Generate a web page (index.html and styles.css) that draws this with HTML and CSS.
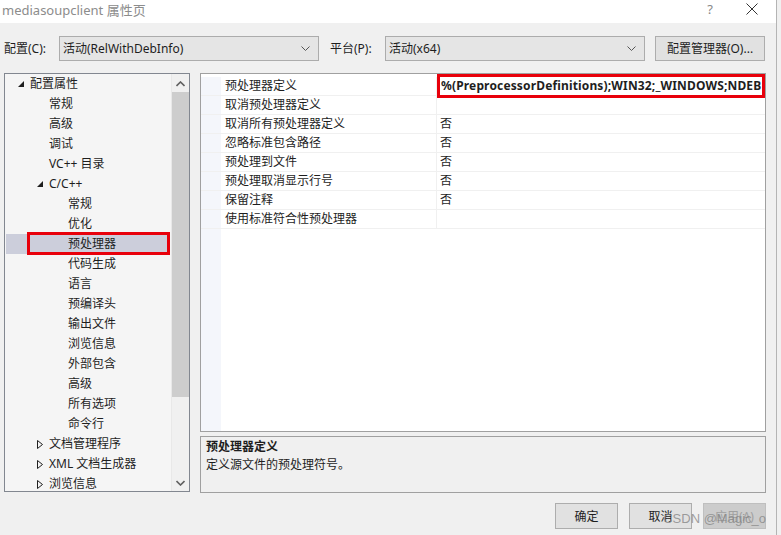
FILE: index.html
```html
<!DOCTYPE html>
<html lang="zh-CN">
<head>
  <meta charset="UTF-8">
  <title>mediasoupclient 属性页</title>
  <link rel="stylesheet" href="styles.css">
</head>
<body>

<div class="dialog">
  <div class="titlebar">
    <span class="title">mediasoupclient 属性页</span>
    <span class="title-help">?</span>
    <span class="title-close">
      <svg width="12" height="12" viewBox="0 0 12 12"><path d="M0.5 0.5 L11.5 11.5 M11.5 0.5 L0.5 11.5" stroke="#333" stroke-width="1" fill="none"/></svg>
    </span>
  </div>

  <div class="toolbar">
    <span class="tb-label">配置(C):</span>
    <div class="select select-config">
      <span>活动(RelWithDebInfo)</span>
      <svg class="chev" width="9" height="5" viewBox="0 0 9 5"><path d="M0.5 0.5 L4.5 4.5 L8.5 0.5" stroke="#555" fill="none"/></svg>
    </div>
    <span class="tb-label tb-label-platform">平台(P):</span>
    <div class="select select-platform">
      <span>活动(x64)</span>
      <svg class="chev" width="9" height="5" viewBox="0 0 9 5"><path d="M0.5 0.5 L4.5 4.5 L8.5 0.5" stroke="#555" fill="none"/></svg>
    </div>
    <button class="btn btn-manager">配置管理器(O)...</button>
  </div>

  <div class="main">
    <div class="tree">
      <ul class="tree-list">
        <li class="lvl0"><svg class="tri" width="6" height="6" viewBox="0 0 6 6"><path d="M6 0 L6 6 L0 6 Z" fill="#1e1e1e"/></svg>配置属性</li>
        <li class="lvl1">常规</li>
        <li class="lvl1">高级</li>
        <li class="lvl1">调试</li>
        <li class="lvl1">VC++ 目录</li>
        <li class="lvl1 has-tri"><svg class="tri" width="6" height="6" viewBox="0 0 6 6"><path d="M6 0 L6 6 L0 6 Z" fill="#1e1e1e"/></svg>C/C++</li>
        <li class="lvl2">常规</li>
        <li class="lvl2">优化</li>
        <li class="lvl2 selected">预处理器<span class="mark mark-tree"></span></li>
        <li class="lvl2">代码生成</li>
        <li class="lvl2">语言</li>
        <li class="lvl2">预编译头</li>
        <li class="lvl2">输出文件</li>
        <li class="lvl2">浏览信息</li>
        <li class="lvl2">外部包含</li>
        <li class="lvl2">高级</li>
        <li class="lvl2">所有选项</li>
        <li class="lvl2">命令行</li>
        <li class="lvl1 has-tri"><svg class="tri tri-open" width="6" height="9" viewBox="0 0 6 9"><path d="M0.5 0.5 L5.5 4.5 L0.5 8.5 Z" stroke="#1e1e1e" fill="none"/></svg>文档管理程序</li>
        <li class="lvl1 has-tri"><svg class="tri tri-open" width="6" height="9" viewBox="0 0 6 9"><path d="M0.5 0.5 L5.5 4.5 L0.5 8.5 Z" stroke="#1e1e1e" fill="none"/></svg>XML 文档生成器</li>
        <li class="lvl1 has-tri"><svg class="tri tri-open" width="6" height="9" viewBox="0 0 6 9"><path d="M0.5 0.5 L5.5 4.5 L0.5 8.5 Z" stroke="#1e1e1e" fill="none"/></svg>浏览信息</li>
      </ul>
      <div class="scrollbar">
        <svg class="sb-arrow" width="9" height="6" viewBox="0 0 9 6"><path d="M0.5 5 L4.5 1 L8.5 5" stroke="#606060" stroke-width="1.6" fill="none"/></svg>
        <div class="sb-track"><div class="sb-thumb"></div></div>
        <svg class="sb-arrow" width="9" height="6" viewBox="0 0 9 6"><path d="M0.5 1 L4.5 5 L8.5 1" stroke="#606060" stroke-width="1.6" fill="none"/></svg>
      </div>
    </div>

    <div class="right">
      <div class="grid">
        <div class="row">
          <div class="gutter"></div>
          <div class="name">预处理器定义</div>
          <div class="value value-bold"><span class="clip">%(PreprocessorDefinitions);WIN32;_WINDOWS;NDEB</span><span class="mark mark-value"></span></div>
        </div>
        <div class="row">
          <div class="gutter"></div>
          <div class="name">取消预处理器定义</div>
          <div class="value"></div>
        </div>
        <div class="row">
          <div class="gutter"></div>
          <div class="name">取消所有预处理器定义</div>
          <div class="value">否</div>
        </div>
        <div class="row">
          <div class="gutter"></div>
          <div class="name">忽略标准包含路径</div>
          <div class="value">否</div>
        </div>
        <div class="row">
          <div class="gutter"></div>
          <div class="name">预处理到文件</div>
          <div class="value">否</div>
        </div>
        <div class="row">
          <div class="gutter"></div>
          <div class="name">预处理取消显示行号</div>
          <div class="value">否</div>
        </div>
        <div class="row">
          <div class="gutter"></div>
          <div class="name">保留注释</div>
          <div class="value">否</div>
        </div>
        <div class="row">
          <div class="gutter"></div>
          <div class="name">使用标准符合性预处理器</div>
          <div class="value"></div>
        </div>
        <div class="grid-fill">
          <div class="gutter"></div>
        </div>
      </div>

      <div class="desc">
        <div class="desc-title">预处理器定义</div>
        <div class="desc-text">定义源文件的预处理符号。</div>
      </div>
    </div>
  </div>

  <div class="footer">
    <button class="btn">确定</button>
    <button class="btn">取消</button>
    <button class="btn" disabled>应用(A)</button>
    <span class="watermark">CSDN @Magic_o</span>
  </div>
</div>

</body>
</html>
```

FILE: styles.css
```css
body {
  margin: 0;
  background: #f0f0f0;
  font-family: "Noto Sans", "Noto Sans CJK SC", sans-serif;
  font-size: 12px;
  color: #1e1e1e;
}
.dialog {
  width: 776px;
  height: 535px;
  border-right: 1px solid #b4b4b4;
  position: relative;
  overflow: hidden;
}
.titlebar {
  height: 23px;
  background: #fff;
  display: flex;
  align-items: center;
  padding-left: 2px;
}
.title {
  font-size: 13px;
  color: #8c8c8c;
  flex: 1;
  margin-top: -5px;
}
.title-help {
  color: #888;
  font-size: 13px;
  margin-right: 33px;
  margin-top: -6px;
}
.title-close {
  margin-right: 18px;
  margin-top: -6px;
  display: flex;
}
.toolbar {
  height: 50px;
  display: flex;
  align-items: center;
  padding-left: 4px;
  box-sizing: border-box;
}
.tb-label {
  font-size: 12px;
  width: 55px;
}
.tb-label-platform {
  margin-left: 11px;
}
.select {
  height: 25px;
  box-sizing: border-box;
  border: 1px solid #acacac;
  background: #e5e5e5;
  display: flex;
  align-items: center;
  padding-left: 3px;
  padding-right: 8px;
  justify-content: space-between;
}
.select-config {
  width: 260px;
}
.select-platform {
  width: 260px;
}
.btn {
  font-family: "Noto Sans", "Noto Sans CJK SC", sans-serif;
  font-size: 12px;
  color: #1e1e1e;
  background: #e1e1e1;
  border: 1px solid #adadad;
  height: 26px;
  padding: 0;
}
.btn-manager {
  width: 110px;
  margin-left: 10px;
  height: 25px;
}
.main {
  display: flex;
  padding-left: 4px;
  gap: 10px;
}
.tree {
  width: 186px;
  height: 419px;
  box-sizing: border-box;
  border: 1px solid #828790;
  background: #f5f5f5;
  display: flex;
  overflow: hidden;
}
.tree-list {
  list-style: none;
  margin: 0;
  padding: 0;
  flex: 1;
}
.tree-list li {
  height: 20px;
  line-height: 20px;
  white-space: nowrap;
  position: relative;
  margin-left: 1px;
  margin-right: 1px;
}
.lvl0 {
  padding-left: 24px;
}
.lvl1 {
  padding-left: 43px;
}
.lvl2 {
  padding-left: 62px;
}
.tri {
  position: absolute;
  left: 12px;
  top: 7px;
}
.lvl1.has-tri .tri {
  left: 31px;
}
.lvl1.has-tri .tri-open {
  top: 6px;
}
.selected {
  background: #cccedb;
}
.mark {
  position: absolute;
  border: 3px solid #e8000b;
  pointer-events: none;
}
.mark-tree {
  left: 21px;
  right: 0;
  top: -2px;
  bottom: -1px;
}
.scrollbar {
  width: 17px;
  display: flex;
  flex-direction: column;
  align-items: center;
  background: #f0f0f0;
  border-left: 1px solid #e8e8e8;
}
.sb-arrow {
  margin: 7px 0 5px;
}
.sb-track {
  flex: 1;
  width: 100%;
  display: flex;
  flex-direction: column;
}
.sb-thumb {
  height: 305px;
  background: #cdcdcd;
}
.right {
  width: 566px;
  display: flex;
  flex-direction: column;
  gap: 4px;
}
.grid {
  height: 359px;
  box-sizing: border-box;
  border: 1px solid #a0a0a0;
  background: #fff;
  padding-top: 3px;
  display: flex;
  flex-direction: column;
}
.row {
  display: flex;
  height: 19px;
  line-height: 18px;
  border-bottom: 1px solid #f0f0f0;
  box-sizing: border-box;
}
.gutter {
  width: 20px;
  background: #f4f6fb;
  flex-shrink: 0;
}
.name {
  width: 211px;
  flex-shrink: 0;
  padding-left: 4px;
  border-right: 1px solid #f0f0f0;
  white-space: nowrap;
}
.value {
  flex: 1;
  min-width: 0;
  padding-left: 3px;
  white-space: nowrap;
  overflow: hidden;
  position: relative;
}
.value-bold {
  font-weight: bold;
  overflow: visible;
  padding-left: 4px;
  letter-spacing: 0.15px;
}
.clip {
  display: block;
  overflow: hidden;
}
.mark-value {
  left: 0;
  right: 0;
  top: -3px;
  bottom: -3px;
}
.grid-fill {
  flex: 1;
  display: flex;
}
.desc {
  height: 57px;
  box-sizing: border-box;
  border: 1px solid #a0a0a0;
  padding: 1px 5px;
}
.desc-title {
  font-weight: bold;
  line-height: 18px;
}
.desc-text {
  line-height: 18px;
}
.footer {
  display: flex;
  justify-content: flex-end;
  gap: 11px;
  padding-right: 10px;
  margin-top: 10px;
}
.footer .btn {
  width: 63px;
}
.footer .btn:disabled {
  background: #cccccc;
  border-color: #bfbfbf;
  color: #a0a0a0;
}
.watermark {
  position: absolute;
  right: 10px;
  bottom: 9px;
  font-family: "Liberation Sans", sans-serif;
  font-size: 13px;
  color: rgba(130, 130, 130, 0.75);
}
```
